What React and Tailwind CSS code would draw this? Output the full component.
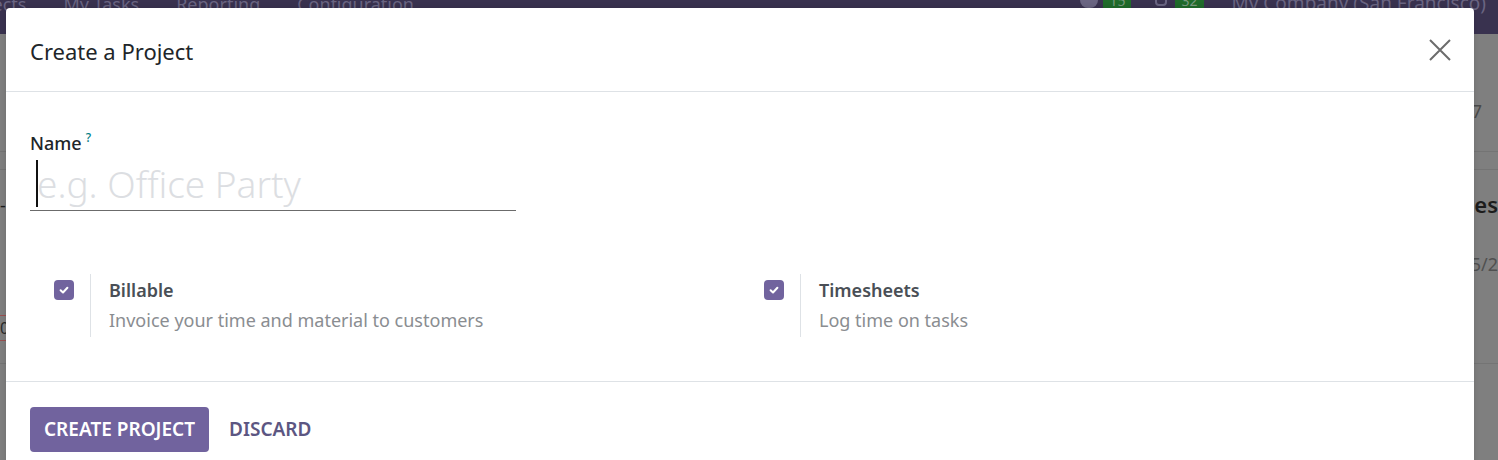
import React from "react";

function Check() {
  return (
    <div className="w-5 h-5 rounded-[4px] bg-[#71639e] flex items-center justify-center shrink-0">
      <svg width="12" height="12" viewBox="0 0 12 12" fill="none">
        <path d="M2.6 6.2 L5 8.5 L9.4 3.8" stroke="white" strokeWidth="2" strokeLinecap="round" strokeLinejoin="round" />
      </svg>
    </div>
  );
}

function Option({ title, desc }) {
  return (
    <div className="flex items-start">
      <div className="w-[60px] flex justify-end pr-4 pt-[6px]">
        <Check />
      </div>
      <div className="border-l border-[#dee2e6] pl-[18px] pt-[1px] pb-[2px]">
        <div className="text-[18px] leading-[30px] font-semibold text-[#4a4f56]">{title}</div>
        <div className="text-[18px] leading-[30px] text-[#8a8d91]">{desc}</div>
      </div>
    </div>
  );
}

export default function App() {
  return (
    <div className="relative w-[1498px] h-[460px] overflow-hidden bg-[#7f7f7f] font-['Noto_Sans',sans-serif]">
      {/* navbar */}
      <div className="h-[34px] bg-[#39324f] flex items-start text-[18px] text-[#6a6582] leading-none">
        <div className="flex gap-[37px] -ml-[41px] -mt-[5px]">
          <span>Projects</span>
          <span>My Tasks</span>
          <span>Reporting</span>
          <span>Configuration</span>
        </div>
        <div className="ml-auto flex items-start gap-0 pr-[12px] -mt-[6px] text-[19px]">
          <span className="w-[18px] h-[16px] rounded-full bg-[#6a6582] mt-[-2px]"></span>
          <span className="bg-[#1f6b2a] text-[#7a9a7f] px-[6px] ml-[5px] text-[14px]">15</span>
          <span className="w-[12px] h-[14px] border-2 border-[#6a6582] rounded-sm ml-[24px] mt-[-2px]"></span>
          <span className="bg-[#1f6b2a] text-[#7a9a7f] px-[6px] ml-[8px] text-[14px]">32</span>
          <span className="ml-[28px]">My Company (San Francisco)</span>
        </div>
      </div>
      {/* background page strips */}
      <div className="flex flex-col text-[18px] text-[#3a3a3a]">
        <div className="h-[118px] border-b border-[#747474] flex justify-end pr-[16px] pt-[64px] text-[#4a4a4a]">7</div>
        <div className="h-[18px] border-b border-[#747474]"></div>
        <div className="h-[194px] border-b border-[#747474] flex justify-between pt-[18px]">
          <div className="flex flex-col pl-0">
            <span className="text-[#1c1c1c] mt-[4px]">-</span>
            <div className="mt-[96px] h-[26px] w-[6px] border-y border-[#9a5050] text-[#2a2a2a] text-[16px] leading-[24px]">0</div>
          </div>
          <div className="flex flex-col items-end">
            <span className="text-[22px] text-[#1c1c1c] font-semibold">es</span>
            <span className="text-[#505050] mt-[30px]">5/2</span>
          </div>
        </div>
        <div className="pt-[62px] text-[#4a4a4a] -ml-[4px]">J</div>
      </div>

      {/* modal */}
      <div className="absolute left-[6px] top-[8px] w-[1468px] h-[470px] bg-white rounded-t-[4px] shadow-[0_0_6px_rgba(0,0,0,0.15)] flex flex-col">
        <div className="h-[84px] border-b border-[#dee2e6] flex items-center justify-between pl-6 pr-[22px]">
          <h4 className="text-[22px] text-[#212529] font-normal pt-[3px]">Create a Project</h4>
          <svg width="24" height="24" viewBox="0 0 24 24" fill="none">
            <path d="M2 2 L22 22 M22 2 L2 22" stroke="#6c6c6c" strokeWidth="2" />
          </svg>
        </div>
        <div className="h-[290px] border-b border-[#dee2e6] px-6 pt-[38px]">
          <div className="text-[18px] font-medium text-[#212529] leading-[26px]">
            Name<span className="text-[#017e84] text-[12px] ml-[4px] relative top-[-8px]">?</span>
          </div>
          <div className="relative w-[486px] h-[50px] border-b border-[#6b6b6b] mt-[2px]">
            <div className="absolute left-[6px] top-[-1px] w-[2px] h-[47px] bg-[#111]"></div>
            <div className="pl-[7px] text-[37px] leading-[46px] text-[#dcdee2] font-light">e.g. Office Party</div>
          </div>
          <div className="grid grid-cols-2 mt-[63px]">
            <Option title="Billable" desc="Invoice your time and material to customers" />
            <Option title="Timesheets" desc="Log time on tasks" />
          </div>
        </div>
        <div className="flex items-center gap-[4px] px-6 pt-[25px]">
          <button className="h-[45px] px-[14px] rounded-[4px] bg-[#71639e] text-white text-[19px] font-semibold uppercase">Create Project</button>
          <button className="h-[45px] px-[16px] text-[#5c5682] text-[19px] font-semibold uppercase">Discard</button>
        </div>
      </div>
    </div>
  );
}
